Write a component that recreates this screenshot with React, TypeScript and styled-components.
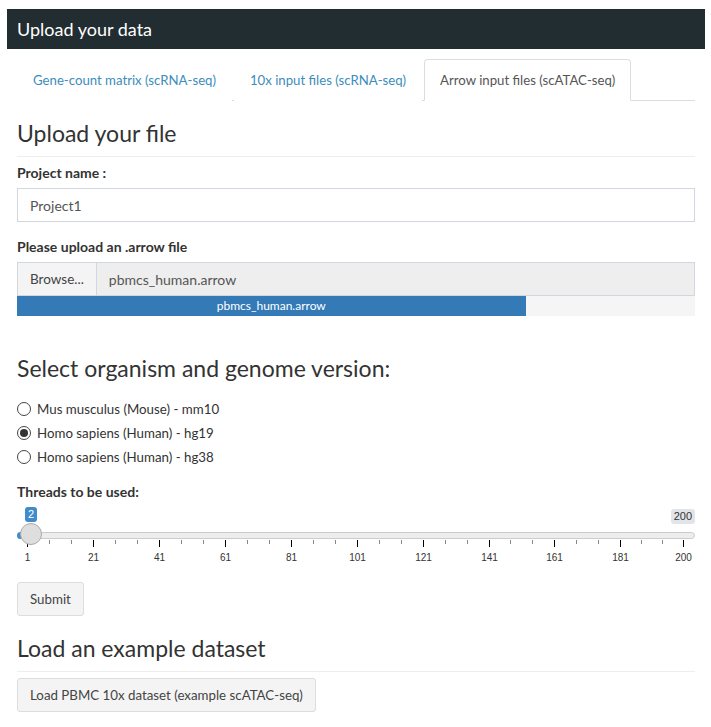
import React from "react";
import styled, { createGlobalStyle } from "styled-components";

const GlobalStyle = createGlobalStyle`
  html, body { margin: 0; padding: 0; background: #fff; }
  body {
    font-family: "Source Sans Pro", Lato, "Open Sans", sans-serif;
    font-size: 14px;
    color: #333;
  }
  * { box-sizing: border-box; }
`;

const Page = styled.div`
  padding: 9px 6px 16px 7px;
`;

const Box = styled.section`
  background: #fff;
`;

const BoxHeader = styled.header`
  background: #222d32;
  color: #fff;
  height: 40px;
  display: flex;
  align-items: center;
  padding: 0 10px;
  font-size: 18px;
`;

const BoxBody = styled.div`
  padding: 10px;
`;

const TabList = styled.nav`
  display: flex;
  gap: 2px;
  border-bottom: 1px solid #ddd;
  height: 42px;
`;

const Tab = styled.a<{ $active?: boolean }>`
  display: block;
  padding: 10px 15px;
  line-height: 20px;
  font-size: 13.2px;
  border: 1px solid ${(p) => (p.$active ? "#ddd" : "transparent")};
  border-bottom-color: ${(p) => (p.$active ? "#fff" : "transparent")};
  border-radius: 4px 4px 0 0;
  background: #fff;
  color: ${(p) => (p.$active ? "#555" : "#3c8dbc")};
  height: 42px;
  text-decoration: none;
  cursor: pointer;
`;

const TabPane = styled.div`
  display: flex;
  flex-direction: column;
  align-items: stretch;
`;

const Heading = styled.h3<{ $rule?: boolean }>`
  margin: 20px 0 ${(p) => (p.$rule ? "6px" : "10px")};
  font-size: 23px;
  font-weight: 400;
  line-height: 1.1;
  color: #333;
  padding-bottom: ${(p) => (p.$rule ? "10px" : "0")};
  border-bottom: ${(p) => (p.$rule ? "1px solid #eee" : "none")};
`;

const FormGroup = styled.div`
  display: flex;
  flex-direction: column;
  margin-bottom: 15px;
`;

const Label = styled.label`
  display: block;
  font-weight: 700;
  font-size: 14px;
  line-height: 20px;
  margin-bottom: 5px;
  color: #333;
`;

const TextInput = styled.input`
  display: block;
  width: 100%;
  height: 34px;
  padding: 6px 12px;
  font-family: inherit;
  font-size: 14px;
  color: #555;
  border: 1px solid #d2d6de;
  outline: none;
`;

const InputGroup = styled.div`
  display: flex;
  height: 34px;
`;

const BrowseButton = styled.span`
  display: flex;
  align-items: center;
  padding: 0 12px;
  background: #f4f4f4;
  border: 1px solid #d2d6de;
  color: #444;
  font-size: 13.5px;
  white-space: nowrap;
`;

const FileName = styled.span`
  flex: 1;
  display: flex;
  align-items: center;
  padding: 0 12px;
  background: #eee;
  border: 1px solid #d2d6de;
  border-left: none;
  color: #555;
  font-size: 14px;
`;

const Progress = styled.div`
  height: 20px;
  background: #f5f5f5;
  display: flex;
  margin-bottom: 5px;
`;

const ProgressBar = styled.div`
  height: 100%;
  background: #337ab7;
  color: #fff;
  font-size: 12px;
  line-height: 20px;
  text-align: center;
`;

const RadioGroup = styled.div`
  display: flex;
  flex-direction: column;
  padding-top: 5px;
  margin-bottom: 13px;
`;

const RadioItem = styled.label`
  display: flex;
  align-items: center;
  gap: 6px;
  height: 24px;
  font-size: 13.3px;
  color: #333;
  cursor: pointer;
`;

const RadioCircle = styled.span<{ $checked?: boolean }>`
  width: 14px;
  height: 14px;
  border-radius: 50%;
  border: 1px solid #444;
  background: #fff;
  display: flex;
  align-items: center;
  justify-content: center;
  &::after {
    content: "";
    width: 8px;
    height: 8px;
    border-radius: 50%;
    background: ${(p) => (p.$checked ? "#333" : "transparent")};
  }
`;

const Slider = styled.div`
  display: flex;
  flex-direction: column;
  height: 60px;
  font-family: "Liberation Sans", Arial, sans-serif;
`;

const TagRow = styled.div`
  display: flex;
  justify-content: space-between;
  align-items: flex-start;
  height: 16px;
  padding-left: 8px;
`;

const ValueTag = styled.span<{ $tone: "blue" | "gray" }>`
  margin-top: ${(p) => (p.$tone === "blue" ? "0" : "2px")};
  padding: 1px 3px;
  font-size: 11px;
  line-height: 13px;
  border-radius: 3px;
  background: ${(p) => (p.$tone === "blue" ? "#428bca" : "#e1e4e9")};
  color: ${(p) => (p.$tone === "blue" ? "#fff" : "#333")};
`;

const Track = styled.div`
  position: relative;
  height: 17px;
  display: flex;
  align-items: flex-end;
  padding-bottom: 1px;
`;

const Line = styled.div`
  flex: 1;
  height: 7px;
  border-radius: 4px;
  background: #ededed;
  border: 1px solid #cccccc;
`;

const Bar = styled.div`
  position: absolute;
  left: 0;
  bottom: 1px;
  width: 12px;
  height: 7px;
  border-radius: 4px 0 0 4px;
  background: #428bca;
`;

const Handle = styled.div`
  position: absolute;
  left: 3px;
  top: 0;
  width: 22px;
  height: 22px;
  border-radius: 50%;
  background: #dedede;
  border: 1px solid #ababab;
  z-index: 1;
`;

const Grid = styled.svg`
  display: block;
  width: 100%;
  height: 26px;
  overflow: visible;
`;

const Button = styled.button`
  align-self: flex-start;
  height: 34px;
  padding: 0 12px;
  font-family: inherit;
  font-size: 13.3px;
  color: #444;
  background: #f4f4f4;
  border: 1px solid #ddd;
  border-radius: 3px;
  cursor: pointer;
`;

const GRID_LEFT = 10;
const GRID_WIDTH = 656;
const pos = (v: number) => GRID_LEFT + ((v - 1) / 199) * GRID_WIDTH;

function SliderGrid() {
  const majors = [1, 21, 41, 61, 81, 101, 121, 141, 161, 181, 200];
  const items: React.ReactNode[] = [];
  majors.forEach((v, i) => {
    const x = Math.round(pos(v)) + 0.5;
    items.push(<line key={`M${v}`} x1={x} x2={x} y1={0} y2={7} stroke="#000" strokeWidth={1} />);
    items.push(
      <text key={`L${v}`} x={x} y={21} textAnchor="middle" fontSize={10} fill="#333">
        {v}
      </text>
    );
    if (i < majors.length - 1) {
      const a = pos(v);
      const step = (pos(majors[i + 1]) - a) / 3;
      [1, 2].forEach((k) => {
        const mx = Math.round(a + k * step) + 0.5;
        items.push(
          <line key={`m${v}${k}`} x1={mx} x2={mx} y1={0} y2={4} stroke="#888" strokeWidth={1} />
        );
      });
    }
  });
  return (
    <Grid viewBox="0 0 678 26" preserveAspectRatio="xMinYMin meet">
      {items}
    </Grid>
  );
}

function RangeSlider() {
  return (
    <Slider>
      <TagRow>
        <ValueTag $tone="blue">2</ValueTag>
        <ValueTag $tone="gray">200</ValueTag>
      </TagRow>
      <Track>
        <Line />
        <Bar />
        <Handle />
      </Track>
      <SliderGrid />
    </Slider>
  );
}

const organisms = [
  "Mus musculus (Mouse) - mm10",
  "Homo sapiens (Human) - hg19",
  "Homo sapiens (Human) - hg38",
];

export default function App() {
  return (
    <>
      <GlobalStyle />
      <Page>
        <Box>
          <BoxHeader>Upload your data</BoxHeader>
          <BoxBody>
            <TabList>
              <Tab>Gene-count matrix (scRNA-seq)</Tab>
              <Tab>10x input files (scRNA-seq)</Tab>
              <Tab $active>Arrow input files (scATAC-seq)</Tab>
            </TabList>

            <TabPane>
              <Heading $rule>Upload your file</Heading>

              <FormGroup>
                <Label>Project name :</Label>
                <TextInput defaultValue="Project1" />
              </FormGroup>

              <FormGroup>
                <Label>Please upload an .arrow file</Label>
                <InputGroup>
                  <BrowseButton>Browse...</BrowseButton>
                  <FileName>pbmcs_human.arrow</FileName>
                </InputGroup>
                <Progress>
                  <ProgressBar style={{ width: "75%" }}>pbmcs_human.arrow</ProgressBar>
                </Progress>
              </FormGroup>

              <Heading>Select organism and genome version:</Heading>
              <RadioGroup>
                {organisms.map((o, i) => (
                  <RadioItem key={o}>
                    <RadioCircle $checked={i === 1} />
                    {o}
                  </RadioItem>
                ))}
              </RadioGroup>

              <FormGroup>
                <Label>Threads to be used:</Label>
                <RangeSlider />
              </FormGroup>

              <Button>Submit</Button>

              <Heading $rule>Load an example dataset</Heading>
              <Button>Load PBMC 10x dataset (example scATAC-seq)</Button>
            </TabPane>
          </BoxBody>
        </Box>
      </Page>
    </>
  );
}
